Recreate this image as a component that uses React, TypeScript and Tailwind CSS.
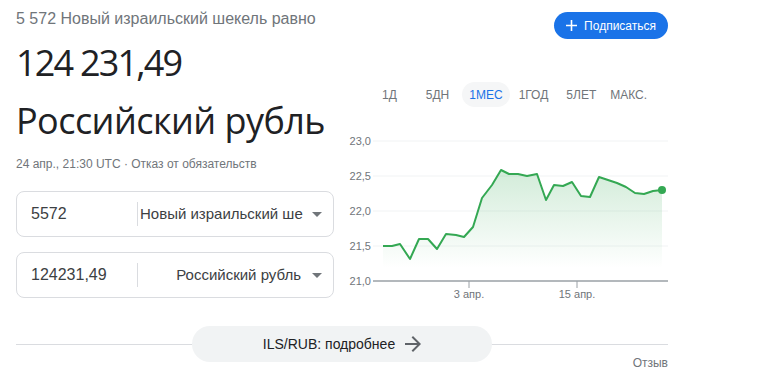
import { Fragment } from 'react';

const pts: [number, number][] = [
  [383, 246], [392, 246], [400, 244], [410, 259], [419, 239], [428, 239], [437, 249],
  [446, 234], [456, 235], [464, 237], [473, 227], [482, 198], [492, 185], [501, 170],
  [509, 174], [518, 174], [527, 176], [537, 174], [546, 200], [554, 185], [563, 186],
  [572, 182], [581, 196], [590, 197], [599, 177], [608, 180], [617, 183], [626, 187],
  [635, 193], [644, 194], [653, 191], [662, 190],
];

const tabs = ['1Д', '5ДН', '1МЕС', '1ГОД', '5ЛЕТ', 'МАКС.'];
const tabGap = [15, 6, 2, 4, 0, 0];

function Caret() {
  return (
    <svg width="10" height="5" viewBox="0 0 10 5" className="shrink-0">
      <path d="M0 0h10L5 5z" fill="#70757a" />
    </svg>
  );
}

function Chart() {
  const line = pts.map(p => p.join(',')).join(' ');
  const area = `M${pts[0][0]},281 L${line.replace(/ /g, ' L')} L${pts[pts.length - 1][0]},281 Z`;
  const grid = [
    { y: 141, t: '23,0' },
    { y: 176, t: '22,5' },
    { y: 211, t: '22,0' },
    { y: 246, t: '21,5' },
  ];
  return (
    <svg width="328" height="175" viewBox="340 130 328 175" className="block">
      <defs>
        <linearGradient id="fill" x1="0" y1="170" x2="0" y2="268" gradientUnits="userSpaceOnUse">
          <stop offset="0" stopColor="#34a853" stopOpacity="0.22" />
          <stop offset="1" stopColor="#34a853" stopOpacity="0" />
        </linearGradient>
      </defs>
      {grid.map(g => (
        <Fragment key={g.y}>
          <line x1="373" x2="668" y1={g.y} y2={g.y} stroke="#f1f3f4" strokeWidth="1" />
          <text x="371" y={g.y + 4} textAnchor="end" fontSize="11" fill="#70757a" fontFamily="Liberation Sans, Arial, sans-serif">{g.t}</text>
        </Fragment>
      ))}
      <text x="371" y="285" textAnchor="end" fontSize="11" fill="#70757a" fontFamily="Liberation Sans, Arial, sans-serif">21,0</text>
      <path d={area} fill="url(#fill)" />
      <polyline points={line} fill="none" stroke="#34a853" strokeWidth="2" strokeLinejoin="round" />
      <circle cx="662" cy="190" r="4" fill="#34a853" />
      <line x1="373" x2="668" y1="281" y2="281" stroke="#9aa0a6" strokeWidth="1.5" />
      <line x1="469" x2="469" y1="281" y2="288" stroke="#9aa0a6" strokeWidth="1" />
      <line x1="577" x2="577" y1="281" y2="288" stroke="#9aa0a6" strokeWidth="1" />
      <text x="469" y="298" textAnchor="middle" fontSize="11" fill="#70757a" fontFamily="Liberation Sans, Arial, sans-serif">3 апр.</text>
      <text x="577" y="298" textAnchor="middle" fontSize="11" fill="#70757a" fontFamily="Liberation Sans, Arial, sans-serif">15 апр.</text>
    </svg>
  );
}

export default function App() {
  return (
    <div className="w-[758px] h-[381px] bg-white overflow-hidden font-['Liberation_Sans',Arial,sans-serif]">
      <div className="w-[652px] ml-4 flex">
        {/* left column */}
        <div className="w-[318px] shrink-0">
          <p className="pt-[9px] text-[16px] leading-[20px] text-[#70757a]">5 572 Новый израильский шекель равно</p>
          <p className="mt-[14px] text-[36px] leading-[40px] text-[#202124] font-['Open_Sans',sans-serif] tracking-[-1.8px]">124 231,49</p>
          <p className="mt-[16px] text-[36px] leading-[44px] text-[#202124] font-['Open_Sans',sans-serif] tracking-[-0.55px]">Российский рубль</p>
          <p className="mt-[14px] text-[12px] leading-[14px] text-[#70757a]">24 апр., 21:30 UTC · Отказ от обязательств</p>

          <div className="mt-[20px] flex flex-col gap-[15px]">
            <div className="h-[46px] border border-[#dadce0] rounded-lg flex items-center pl-[14px] pr-[11px]">
              <span className="w-[106px] text-[16px] text-[#3c4043]">5572</span>
              <span className="w-px h-[24px] bg-[#dadce0]" />
              <span className="flex-1 pl-[2px] text-[15px] text-[#3c4043] whitespace-nowrap overflow-hidden">Новый израильский ше</span>
              <Caret />
            </div>
            <div className="h-[46px] border border-[#dadce0] rounded-lg flex items-center pl-[14px] pr-[11px]">
              <span className="w-[106px] text-[16px] text-[#3c4043]">124231,49</span>
              <span className="w-px h-[24px] bg-[#dadce0]" />
              <span className="flex-1 pr-[11px] text-right text-[15px] text-[#3c4043] whitespace-nowrap">Российский рубль</span>
              <Caret />
            </div>
          </div>
        </div>

        {/* right column */}
        <div className="flex-1 ml-[6px]">
          <div className="flex justify-end pt-3">
            <button className="h-[27px] px-3 rounded-full bg-[#1a73e8] text-white text-[12px] flex items-center gap-[7px]">
              <svg width="11" height="11" viewBox="0 0 11 11">
                <path d="M5.5 0v11M0 5.5h11" stroke="#fff" strokeWidth="1.6" />
              </svg>
              Подписаться
            </button>
          </div>
          <div className="mt-[43px] flex items-center text-[12px] text-[#70757a] pl-[35px]">
            {tabs.map((t, i) => (
              <span
                key={t}
                className={
                  i === 2
                    ? 'h-[25px] px-[7px] flex items-center rounded-full bg-[#f5f6f7] text-[#1a73e8]'
                    : 'h-[25px] px-[7px] flex items-center'
                }
                style={{ marginRight: tabGap[i] }}
              >
                {t}
              </span>
            ))}
          </div>
          <div className="mt-[23px]">
            <Chart />
          </div>
        </div>
      </div>

      {/* footer */}
      <div className="w-[652px] ml-4 mt-[21px] relative flex justify-center">
        <div className="absolute left-0 right-0 top-[18px] h-px bg-[#dadce0]" />
        <button className="relative w-[300px] h-[36px] rounded-full bg-[#f1f3f4] flex items-center justify-center gap-[10px] text-[14px] text-[#202124]">
          ILS/RUB: подробнее
          <svg width="16" height="16" viewBox="4 4 16 16">
            <path d="M12 4l-1.41 1.41L16.17 11H4v2h12.17l-5.58 5.59L12 20l8-8z" fill="#5f6368" />
          </svg>
        </button>
      </div>
      <div className="w-[652px] ml-4 -mt-[6px] text-right text-[12px] leading-[14px] text-[#70757a]">Отзыв</div>
    </div>
  );
}
